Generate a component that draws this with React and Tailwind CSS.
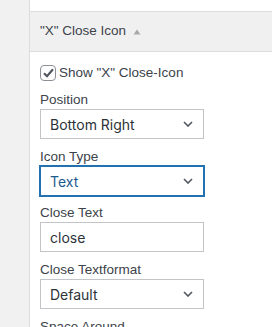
import React from 'react';

const Chevron = () => (
  <svg width="10" height="6" viewBox="0 0 10 6" fill="none" className="shrink-0">
    <path d="M1 1l4 4 4-4" stroke="#50575e" strokeWidth="1.6" />
  </svg>
);

const Label = ({ children }) => (
  <div className="h-[19px] leading-[19px] text-[13.5px] text-[#3c434a]">{children}</div>
);

const Select = ({ value, focused }) => (
  <div
    className={`w-[164px] h-[30px] flex items-center justify-between pl-[9px] pr-[10px] bg-white text-[14px] font-['Inter',sans-serif] ${
      focused
        ? 'border border-[#2271b1] shadow-[0_0_0_1px_#2271b1] text-[#1d5b8f]'
        : 'border border-[#c3c4c7] text-[#2c3338]'
    }`}
  >
    <span>{value}</span>
    <Chevron />
  </div>
);

const App = () => {
  return (
    <div
      className="w-[272px] h-[327px] overflow-hidden flex bg-[#f1f1f1]"
      style={{ fontFamily: '"Liberation Sans", Arial, sans-serif' }}
    >
      <div className="w-[29px] shrink-0" />
      <div className="flex-1 bg-white border-l border-[#dcdcde] flex flex-col">
        <div className="h-[12px] shrink-0 border-b border-[#dcdcde]" />
        <div className="h-[40px] shrink-0 bg-[#f0f0f1] border-b border-[#dcdcde] flex items-center pl-[10px] gap-[7px] text-[13.5px] text-[#3c434a]">
          <span>"X" Close Icon</span>
          <svg width="8" height="6" viewBox="0 0 8 6">
            <path d="M4 0.5L7.5 5.5H0.5z" fill="#a7aaad" />
          </svg>
        </div>
        <div className="shrink-0 pl-[10px] pt-[11px] flex flex-col">
          <label className="h-[20px] flex items-center gap-[3px] text-[13.5px] text-[#3c434a]">
            <span className="w-[16px] h-[16px] rounded-[4px] border border-[#8c8f94] bg-white flex items-center justify-center">
              <svg width="13" height="12" viewBox="0 0 13 12">
                <path d="M2 6.2l3 3 6-7" stroke="#50575e" strokeWidth="2.2" fill="none" />
              </svg>
            </span>
            <span>Show "X" Close-Icon</span>
          </label>
          <div className="mt-[7px]">
            <Label>Position</Label>
            <Select value="Bottom Right" />
          </div>
          <div className="mt-[8px]">
            <Label>Icon Type</Label>
            <Select value="Text" focused />
          </div>
          <div className="mt-[7px]">
            <Label>Close Text</Label>
            <div className="w-[164px] h-[30px] flex items-center pl-[9px] border border-[#c3c4c7] text-[14px] text-[#2c3338] font-['Inter',sans-serif]">
              close
            </div>
          </div>
          <div className="mt-[8px]">
            <Label>Close Textformat</Label>
            <Select value="Default" />
          </div>
          <div className="mt-[8px]">
            <Label>Space Around</Label>
          </div>
        </div>
      </div>
    </div>
  );
};

export default App;
